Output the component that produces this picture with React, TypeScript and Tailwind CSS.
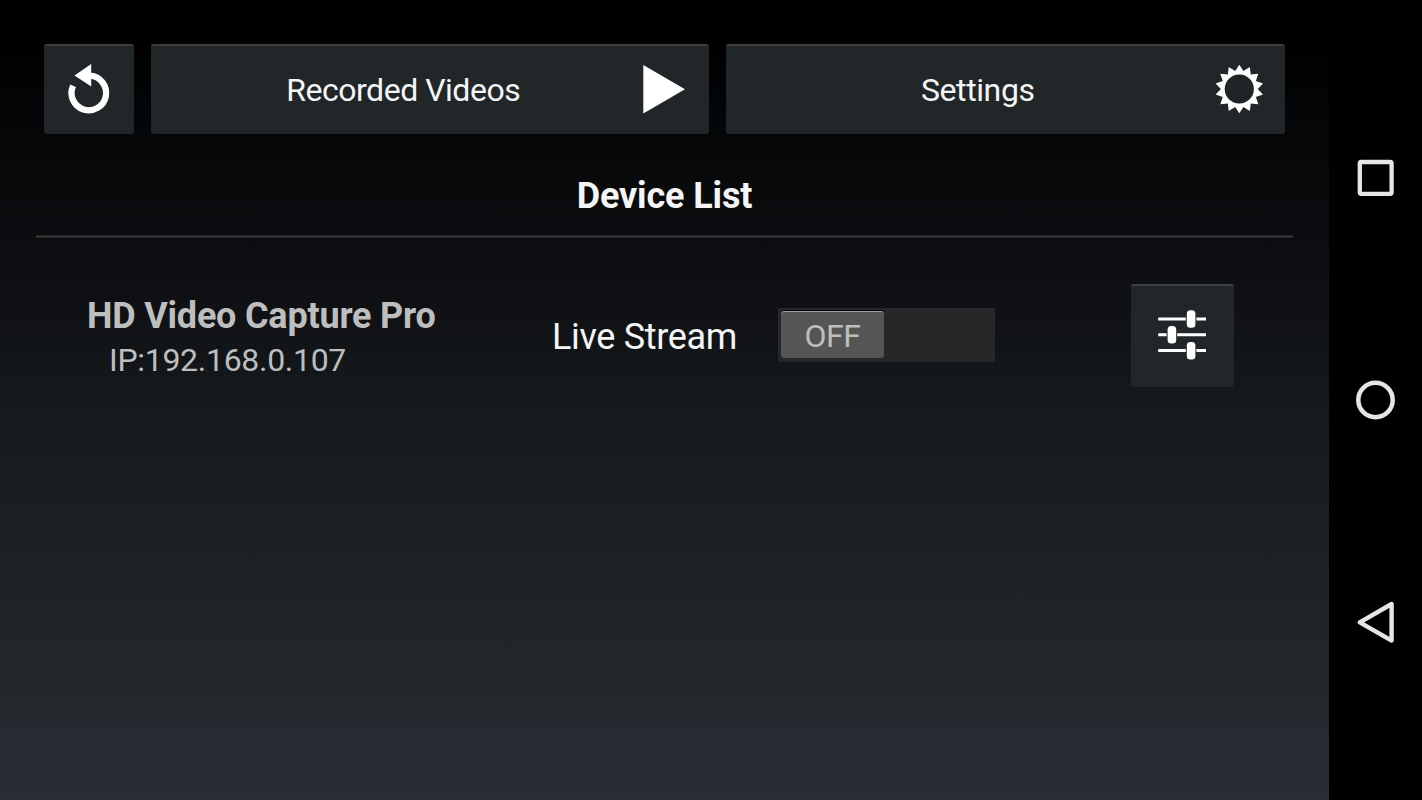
import type { ReactNode } from 'react';

interface PanelButtonProps {
  label: string;
  className: string;
  children: ReactNode;
}

const PanelButton = ({ label, className, children }: PanelButtonProps) => {
  return (
    <button
      type="button"
      aria-label={label}
      className={`flex shrink-0 items-center rounded-[3px] border-t-2 border-[#3c3e41] bg-[#212629] ${className}`}
    >
      {children}
    </button>
  );
};

const RefreshIcon = () => (
  <svg width="50" height="60" viewBox="0.4 0.8 50 60" fill="none">
    <path d="M26.5 16.5A17.3 17.3 0 1 1 9.5 26.5" stroke="#fff" strokeWidth="6.3" />
    <path d="M10.9 16.2L27.6 4.8V27.2Z" fill="#fff" />
  </svg>
);

const PlayIcon = () => (
  <svg width="42" height="50" viewBox="0 1 42 50">
    <path d="M0.3 1V49.6L42 25.2Z" fill="#fff" />
  </svg>
);

// 14 teeth around a hollow ring
const gearPoints = Array.from({ length: 28 }, (_, i) => {
  const angle = (i * Math.PI) / 14;
  const radius = i % 2 === 0 ? 24.3 : 18.4;
  return `${25 + radius * Math.sin(angle)},${25 - radius * Math.cos(angle)}`;
}).join(' ');

const GearIcon = () => (
  <svg width="50" height="50" viewBox="0.7 1 50 50">
    <polygon points={gearPoints} fill="#fff" />
    <circle cx="25" cy="25" r="14.6" fill="#1f2427" />
  </svg>
);

const SlidersIcon = () => (
  <svg width="50" height="54" viewBox="0 1.7 50 54">
    <path
      d="M1.2 10.8H28.8M39.4 10.8H49M1.2 26.5H9.6M20.2 26.5H49M1.2 42.3H28.8M39.4 42.3H49"
      stroke="#fff"
      strokeWidth="3"
    />
    <rect x="29.8" y="1.9" width="8.6" height="17.6" rx="3.5" fill="#fff" />
    <rect x="10.6" y="17.7" width="8.6" height="17.6" rx="3.5" fill="#fff" />
    <rect x="29.8" y="33.6" width="8.6" height="17.6" rx="3.5" fill="#fff" />
  </svg>
);

const TopBar = () => (
  <div className="flex h-[90px] gap-[17px] px-2">
    <PanelButton label="Refresh" className="w-[89.5px] justify-center">
      <RefreshIcon />
    </PanelButton>
    <PanelButton label="Recorded Videos" className="w-[558.5px] pr-6">
      <span className="flex-1 pl-[13px] text-center text-[32px] leading-none tracking-[-0.48px]">
        Recorded Videos
      </span>
      <PlayIcon />
    </PanelButton>
    <PanelButton label="Settings" className="w-[558.5px] pr-5">
      <span className="flex-1 pl-[15px] text-center text-[32px] leading-none tracking-[-0.4px]">
        Settings
      </span>
      <GearIcon />
    </PanelButton>
  </div>
);

interface DeviceRowProps {
  name: string;
  ip: string;
}

const DeviceRow = ({ name, ip }: DeviceRowProps) => {
  return (
    <div className="mt-[46px] flex h-[103px] items-center">
      <div className="ml-[51px] w-[465px] pt-[4px] text-[#bebebe]">
        <div className="text-[36px] leading-[44px] font-bold tracking-[-0.2px]">{name}</div>
        <div className="pl-[22px] text-[32px] leading-[44px] tracking-[-0.3px]">IP:{ip}</div>
      </div>
      <div className="w-[226px] pt-[3px] text-[36px] leading-[44px] tracking-[-0.33px]">Live Stream</div>
      <div className="mb-[2px] flex h-[54px] w-[217px] items-start bg-[#262729] p-[3px]">
        <div className="flex h-[47px] w-[103px] items-center justify-center rounded-[3px] border-t border-[#a0a0a0] bg-[#555555] pt-[3px] text-[32px] leading-none tracking-[-0.4px] text-[#bebebe] shadow-[0_-1px_0_#000]">
          OFF
        </div>
      </div>
      <PanelButton label="Device options" className="ml-[135.5px] h-[103px] w-[103px] justify-center">
        <SlidersIcon />
      </PanelButton>
    </div>
  );
};

const NavigationBar = () => (
  <nav className="flex flex-1 flex-col items-center bg-black pt-[153px]">
    <svg width="50" height="50" viewBox="0.6 0 50 50" fill="none" stroke="#e6e6e6">
      <rect x="9.4" y="9" width="31.8" height="31.8" rx="1.5" strokeWidth="4.3" />
    </svg>
    <svg className="mt-[172px]" width="50" height="50" viewBox="0.5 0 50 50" fill="none" stroke="#e6e6e6">
      <circle cx="25" cy="25" r="17.2" strokeWidth="4.5" />
    </svg>
    <svg className="mt-[172px]" width="50" height="50" viewBox="0.6 0 50 50" fill="none" stroke="#e6e6e6">
      <path d="M41.2 7V43.6L9.4 25.3Z" strokeWidth="4.4" strokeLinejoin="round" />
    </svg>
  </nav>
);

const App = () => {
  return (
    <div className="flex h-[800px] w-[1422px] overflow-hidden bg-black font-['Roboto',sans-serif] text-[#f5f5f5]">
      <main className="w-[1329px] bg-[linear-gradient(to_bottom,#000_0px,#010102_50px,#08090b_170px,#101114_310px,#14191b_390px,#1e2226_570px,#24282b_690px,#272b33_750px,#282c35_800px)] px-9 pt-[44px]">
        <TopBar />
        <h1 className="mt-[40px] text-center text-[36px] leading-[44px] font-bold tracking-[-0.15px]">
          Device List
        </h1>
        <div className="mt-[17px] h-[3px] border-y border-[#232426] bg-[#3c3c3e]" />
        <DeviceRow name="HD Video Capture Pro" ip="192.168.0.107" />
      </main>
      <NavigationBar />
    </div>
  );
};

export default App;
